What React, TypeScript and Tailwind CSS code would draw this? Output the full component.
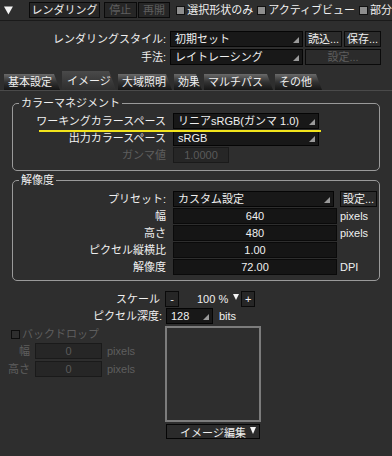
import React from "react";

const tabs = [
  { label: "基本設定", w: "w-[56px]" },
  { label: "イメージ", w: "w-[54px]", active: true },
  { label: "大域照明", w: "w-[54px]" },
  { label: "効果", w: "w-[28px]" },
  { label: "マルチパス", w: "w-[69px]" },
  { label: "その他", w: "w-[47px]" },
];

function Corner() {
  return (
    <svg className="absolute right-[3px] bottom-[3px]" width="6" height="6" viewBox="0 0 6 6">
      <path d="M6 0V6H0z" fill="#9a9a9a" />
    </svg>
  );
}

function Dropdown({ className = "", children }: { className?: string; children: React.ReactNode }) {
  return (
    <div className={`relative h-[16px] bg-[#181818] border border-[#050505] flex items-center pl-[4px] whitespace-nowrap ${className}`}>
      {children}
      <Corner />
    </div>
  );
}

function Btn({ className = "", disabled = false, children }: { className?: string; disabled?: boolean; children: React.ReactNode }) {
  return (
    <div
      className={`h-[16px] border border-[#0a0a0a] bg-[#2b2b2b] flex items-center justify-center whitespace-nowrap ${
        disabled ? "text-[#5e5e5e]" : "text-[#f0f0f0]"
      } ${className}`}
    >
      {children}
    </div>
  );
}

function Field({ className = "", dim = false, children }: { className?: string; dim?: boolean; children: React.ReactNode }) {
  return (
    <div
      className={`h-[16px] bg-[#151515] border border-[#0a0a0a] flex items-center justify-center ${
        dim ? "text-[#5a5a5a] bg-[#262626] border-[#1a1a1a]" : ""
      } ${className}`}
    >
      {children}
    </div>
  );
}

function Check() {
  return <span className="inline-block w-[9px] h-[9px] bg-[#8e8e8e] border border-[#111]" />;
}

export default function App() {
  return (
    <div className="w-[392px] h-[456px] overflow-hidden bg-[#2e2e2e] text-[11px] leading-[14px] text-[#f0f0f0] font-['Liberation_Sans','Noto_Sans_CJK_JP',sans-serif]">
      {/* top bar */}
      <div className="h-[21px] flex items-center border-b border-[#1a1a1a] whitespace-nowrap">
        <svg className="ml-[4px]" width="9" height="9" viewBox="0 0 9 9">
          <path d="M0 0.5H9L4.5 8.5z" fill="#f4f4f4" />
        </svg>
        <Btn className="ml-[16px] w-[72px] h-[15px] bg-[#262626]">レンダリング</Btn>
        <Btn disabled className="ml-[4px] w-[33px] h-[15px] bg-[#262626]">停止</Btn>
        <Btn disabled className="ml-[1px] w-[33px] h-[15px] bg-[#262626]">再開</Btn>
        <div className="ml-[6px] flex items-center gap-[2px]">
          <Check />
          <span>選択形状のみ</span>
        </div>
        <div className="ml-[4px] flex items-center gap-[2px]">
          <Check />
          <span>アクティブビュー</span>
        </div>
        <div className="ml-[4px] flex items-center gap-[2px]">
          <Check />
          <span>部分</span>
        </div>
      </div>

      {/* style rows */}
      <div className="mt-[10px] flex flex-col gap-[2px]">
        <div className="flex items-center">
          <div className="w-[166px] text-right">レンダリングスタイル:</div>
          <Dropdown className="ml-[4px] w-[133px]">初期セット</Dropdown>
          <Btn className="ml-[2px] w-[37px]">読込...</Btn>
          <Btn className="ml-[2px] w-[37px]">保存...</Btn>
        </div>
        <div className="flex items-center">
          <div className="w-[166px] text-right">手法:</div>
          <Dropdown className="ml-[4px] w-[133px]">レイトレーシング</Dropdown>
          <Btn disabled className="ml-[2px] w-[76px]">設定...</Btn>
        </div>
      </div>

      {/* tabs */}
      <div className="mt-[6px] h-[20px] flex items-end gap-[2px] pl-[4px] border-b border-[#4a4a4a]">
        {tabs.map((t) =>
          t.active ? (
            <div
              key={t.label}
              className={`${t.w} h-[19px] flex items-center pl-[5px] bg-gradient-to-b from-[#4a4a4a] to-[#2e2e2e] [clip-path:polygon(0_0,calc(100%-7px)_0,100%_100%,0_100%)]`}
            >
              {t.label}
            </div>
          ) : (
            <div
              key={t.label}
              className={`${t.w} h-[16px] flex items-center pl-[4px] bg-gradient-to-b from-[#6a6a6a] via-[#333] to-[#151515] [clip-path:polygon(0_0,calc(100%-6px)_0,100%_100%,0_100%)]`}
            >
              {t.label}
            </div>
          )
        )}
      </div>

      {/* color management */}
      <fieldset className="relative mx-[12px] mt-[5px] border border-[#9a9a9a] rounded-[5px] pb-[7px]">
        <legend className="ml-[6px] px-[2px]">カラーマネジメント</legend>
        <div className="mt-[3px] flex flex-col gap-[1px]">
          <div className="flex items-center">
            <div className="w-[153px] text-right">ワーキングカラースペース</div>
            <Dropdown className="ml-[7px] w-[146px]">リニアsRGB(ガンマ 1.0)</Dropdown>
          </div>
          <div className="flex items-center">
            <div className="w-[153px] text-right">出力カラースペース</div>
            <Dropdown className="ml-[7px] w-[146px]">sRGB</Dropdown>
          </div>
          <div className="flex items-center">
            <div className="w-[153px] text-right text-[#5e5e5e]">ガンマ値</div>
            <Field dim className="ml-[7px] w-[56px] h-[15px]">1.0000</Field>
          </div>
        </div>
        {/* yellow highlight */}
        <div className="absolute left-[26px] top-[20px] w-[282px] h-[2px] bg-[#f2e41c]" />
      </fieldset>

      {/* resolution */}
      <fieldset className="mx-[12px] mt-[2px] border border-[#9a9a9a] rounded-[5px] pb-[5px]">
        <legend className="ml-[6px] px-[2px]">解像度</legend>
        <div className="mt-[4px] flex flex-col gap-[1px]">
          <div className="flex items-center">
            <div className="w-[153px] text-right">プリセット:</div>
            <Dropdown className="ml-[7px] w-[161px]">カスタム設定</Dropdown>
            <Btn className="ml-[6px] w-[37px]">設定...</Btn>
          </div>
          {[
            ["幅", "640", "pixels"],
            ["高さ", "480", "pixels"],
            ["ピクセル縦横比", "1.00", ""],
            ["解像度", "72.00", "DPI"],
          ].map(([l, v, u]) => (
            <div key={l} className="flex items-center">
              <div className="w-[153px] text-right">{l}</div>
              <Field className="ml-[7px] w-[164px]">{v}</Field>
              <span className="ml-[3px]">{u}</span>
            </div>
          ))}
        </div>
      </fieldset>

      {/* scale / depth */}
      <div className="mt-[10px] flex flex-col gap-[2px]">
        <div className="flex items-center h-[15px]">
          <div className="w-[160px] text-right">スケール</div>
          <Btn className="ml-[5px] w-[14px] h-[15px] bg-[#262626]">-</Btn>
          <span className="ml-[18px]">100 %</span>
          <svg className="ml-[5px] -mt-[4px]" width="6" height="6" viewBox="0 0 6 6">
            <path d="M0 0H6L3 6z" fill="#f4f4f4" />
          </svg>
          <Btn className="ml-[2px] w-[14px] h-[15px] bg-[#262626]">+</Btn>
        </div>
        <div className="flex items-center">
          <div className="w-[162px] text-right">ピクセル深度:</div>
          <Dropdown className="ml-[4px] w-[47px] h-[15px]">128</Dropdown>
          <span className="ml-[6px]">bits</span>
        </div>
      </div>

      {/* backdrop + preview */}
      <div className="mt-[2px] flex">
        <div className="w-[165px] pl-[11px] pt-[1px] text-[#5e5e5e]">
          <div className="flex items-center gap-[2px]">
            <span className="inline-block w-[9px] h-[9px] border border-[#0d0d0d]" />
            <span>バックドロップ</span>
          </div>
          <div className="mt-[2px] flex flex-col gap-[2px]">
            {["幅", "高さ"].map((l) => (
              <div key={l} className="flex items-center">
                <div className="w-[22px] -ml-[3px] text-right whitespace-nowrap">{l}</div>
                <Field dim className="ml-[5px] w-[67px] h-[14px] bg-[#2b2b2b]">0</Field>
                <span className="ml-[5px]">pixels</span>
              </div>
            ))}
          </div>
        </div>
        <div className="flex flex-col">
          <div className="w-[96px] h-[96px] border-2 border-[#7c7c7c]" />
          <div className="mt-[2px] ml-[1px] w-[94px] h-[15px] border border-[#050505] bg-[#2b2b2b] flex items-center justify-center relative">
            <span className="mt-[2px]">イメージ編集</span>
            <svg className="absolute right-[3px] top-[2px]" width="6" height="7" viewBox="0 0 6 7">
              <path d="M0 0H6L3 7z" fill="#f4f4f4" />
            </svg>
          </div>
        </div>
      </div>
    </div>
  );
}
